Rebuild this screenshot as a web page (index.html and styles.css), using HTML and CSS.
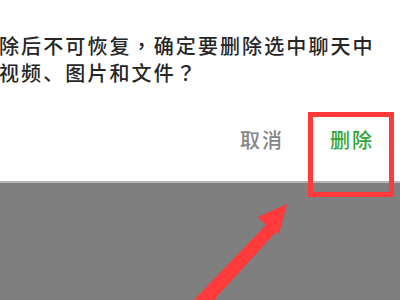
FILE: index.html
```html
<!DOCTYPE html>
<html lang="zh-CN">
<head>
<meta charset="utf-8">
<link rel="stylesheet" href="styles.css">
</head>
<body>
<div class="dialog">
  <p class="msg">除后不可恢复<span class="punct" lang="zh-TW">，</span>确定要删除选中聊天中<br>视频、图片和文件<span class="punct" lang="zh-TW">？</span></p>
  <div class="actions">
    <span class="btn cancel">取消</span>
    <span class="btn delete">删除</span>
  </div>
</div>
<div class="mask"></div>
<div class="highlight"></div>
<svg class="arrow" width="400" height="300" viewBox="0 0 400 300">
  <polygon fill="#fe3a3a" points="287,204 258,217 266,225 190,304 203,312 276,232 279,234"/>
</svg>
</body>
</html>
```
FILE: styles.css
```css
html, body {
  margin: 0;
  padding: 0;
  width: 400px;
  height: 300px;
  overflow: hidden;
  background: #7f7f7f;
  font-family: "Noto Sans CJK SC", "Noto Sans", sans-serif;
}
.dialog {
  height: 183px;
  background: #fff;
  box-sizing: border-box;
  padding-top: 32px;
  border-bottom: 2px solid #b4b4b4;
}
.msg {
  margin: 0 0 0 -1px;
  font-size: 20px;
  line-height: 27px;
  letter-spacing: 2.1px;
  color: #262626;
  font-weight: 500;
}
.punct {
  font-family: "Noto Sans CJK TC", "Noto Sans CJK SC", sans-serif;
}
.actions {
  display: flex;
  justify-content: flex-end;
  gap: 46px;
  margin-top: 40px;
  padding-right: 26px;
}
.btn {
  font-size: 20px;
  line-height: 27px;
  letter-spacing: 2px;
  font-weight: 500;
}
.cancel { color: #858585; }
.delete { color: #35a535; }
.mask { height: 117px; }
.highlight {
  position: absolute;
  left: 308px;
  top: 112px;
  width: 86px;
  height: 85px;
  box-sizing: border-box;
  border: 5px solid #fe3a3a;
}
.arrow {
  position: absolute;
  left: 0;
  top: 0;
}
```
